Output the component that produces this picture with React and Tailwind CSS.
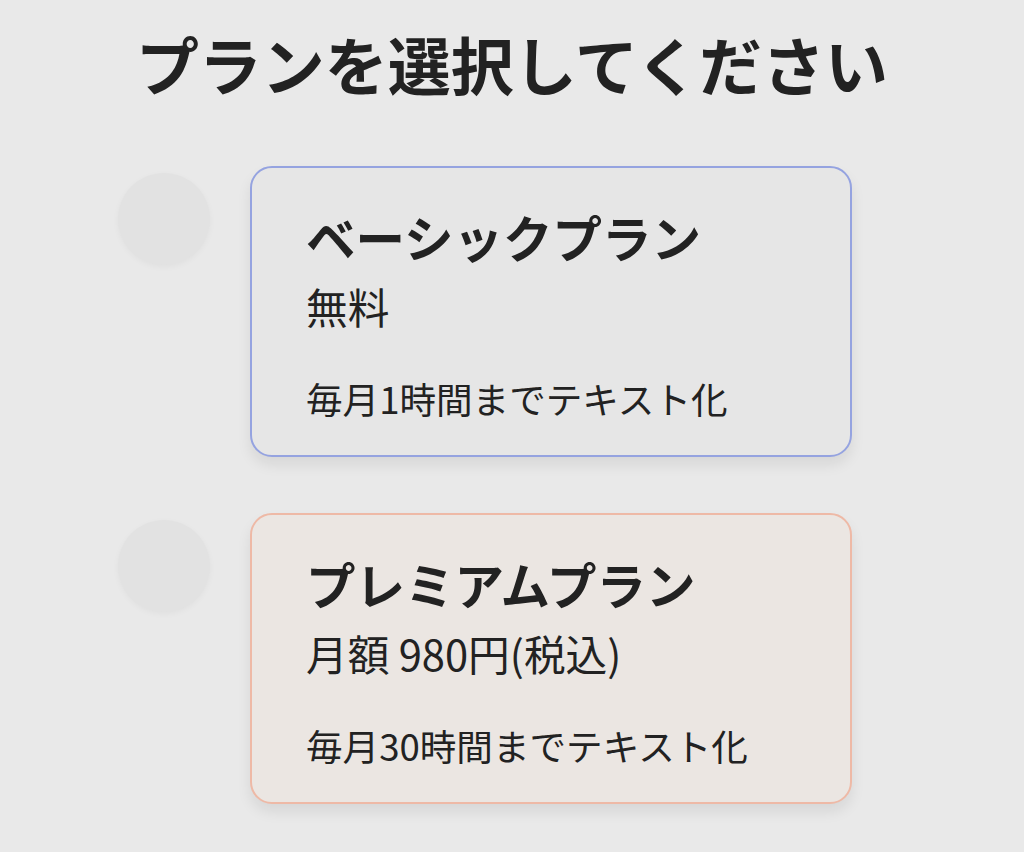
import React from 'react';

const plans = [
  {
    id: 'basic',
    name: 'ベーシックプラン',
    price: '無料',
    detail: '毎月1時間までテキスト化',
    cardClass: 'border-[#95a3e0] bg-[#e6e6e6]',
  },
  {
    id: 'premium',
    name: 'プレミアムプラン',
    price: '月額 980円(税込)',
    detail: '毎月30時間までテキスト化',
    cardClass: 'border-[#eeb9a6] bg-[#ebe6e2]',
  },
];

const App = () => {
  return (
    <div
      className="min-h-[852px] w-full bg-[#e9e9e9] text-[#222222]"
      style={{ fontFamily: '"Noto Sans CJK JP", "Noto Sans", sans-serif' }}
    >
      <h1 className="pt-[26px] text-center text-[63px] font-bold leading-[74px]">
        プランを選択してください
      </h1>

      <div className="mt-[66px] flex flex-col gap-[56px] pl-[118px]">
        {plans.map((plan) => (
          <div key={plan.id} className="flex items-start">
            <div className="mt-[7px] h-[92px] w-[92px] shrink-0 rounded-full bg-[#e2e2e2] shadow-[0_2px_6px_rgba(0,0,0,0.04)]" />
            <div
              className={`ml-[40px] h-[291px] w-[602px] rounded-[22px] border-2 px-[54px] pt-[35px] shadow-[0_8px_14px_rgba(0,0,0,0.08)] ${plan.cardClass}`}
            >
              <h2 className="text-[49.5px] font-bold leading-[68px]">{plan.name}</h2>
              <p className="mt-[6px] text-[41.7px] leading-[58px]">{plan.price}</p>
              <p className="mt-[39px] text-[36.6px] leading-[50px]">{plan.detail}</p>
            </div>
          </div>
        ))}
      </div>
    </div>
  );
};

export default App;
